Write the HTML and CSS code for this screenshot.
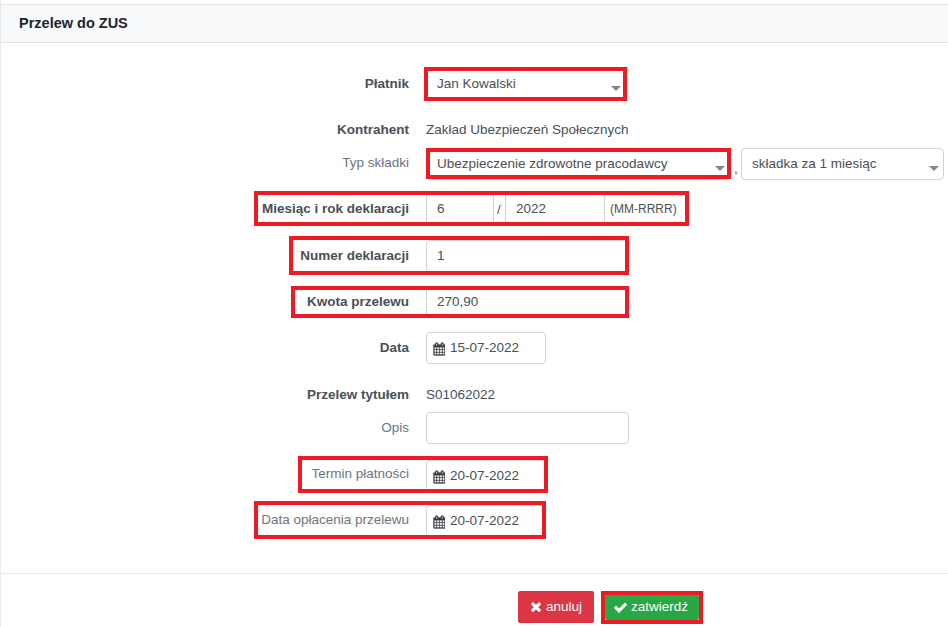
FILE: index.html
```html
<!DOCTYPE html>
<html lang="pl">
<head>
<meta charset="utf-8">
<title>Przelew do ZUS</title>
<link rel="stylesheet" href="styles.css">
</head>
<body>
<svg class="defs" width="0" height="0" aria-hidden="true">
  <symbol id="cal" viewBox="0 0 1664 1792"><path d="M192 1664h288v-288h-288v288zm352 0h320v-288h-320v288zm-352-352h288v-320h-288v320zm352 0h320v-320h-320v320zm-352-384h288v-288h-288v288zm736 736h320v-288h-320v288zm-384-736h320v-288h-320v288zm768 736h288v-288h-288v288zm-384-352h320v-320h-320v320zm-352-864v-288q0-13-9.500-22.500t-22.500-9.500h-64q-13 0-22.500 9.500t-9.500 22.500v288q0 13 9.500 22.500t22.500 9.500h64q13 0 22.500-9.500t9.500-22.500zm736 864h288v-320h-288v320zm-384-384h320v-288h-320v288zm384 0h288v-288h-288v288zm32-480v-288q0-13-9.500-22.500t-22.500-9.500h-64q-13 0-22.500 9.500t-9.500 22.500v288q0 13 9.500 22.500t22.500 9.500h64q13 0 22.500-9.500t9.500-22.500zm384-64v1280q0 52-38 90t-90 38h-1408q-52 0-90-38t-38-90v-1280q0-52 38-90t90-38h128v-96q0-66 47-113t113-47h64q66 0 113 47t47 113v96h384v-96q0-66 47-113t113-47h64q66 0 113 47t47 113v96h128q52 0 90 38t38 90z"/></symbol>
</svg>
<main class="panel">
  <header class="head"><h1 class="title">Przelew do ZUS</h1></header>
  <form class="form">
    <div class="row r-platnik">
      <label class="lbl strong">Płatnik</label>
      <div class="ctl select w-200"><span>Jan Kowalski</span><i class="arrow"></i></div>
    </div>
    <div class="row r-kontr">
      <label class="lbl strong">Kontrahent</label>
      <span class="static">Zakład Ubezpieczeń Społecznych</span>
    </div>
    <div class="row r-typ">
      <label class="lbl raised">Typ składki</label>
      <div class="ctl select w-304"><span>Ubezpieczenie zdrowotne pracodawcy</span><i class="arrow"></i></div>
      <span class="comma">,</span>
      <div class="ctl select w-203"><span>składka za 1 miesiąc</span><i class="arrow"></i></div>
    </div>
    <div class="row r-mies">
      <label class="lbl strong">Miesiąc i rok deklaracji</label>
      <input class="ctl w-68" value="6">
      <span class="slash">/</span>
      <input class="ctl w-100" value="2022">
      <span class="hint">(MM-RRRR)</span>
    </div>
    <div class="row r-num">
      <label class="lbl strong">Numer deklaracji</label>
      <input class="ctl w-203" value="1">
    </div>
    <div class="row r-kwota">
      <label class="lbl strong">Kwota przelewu</label>
      <input class="ctl w-203" value="270,90">
    </div>
    <div class="row r-data">
      <label class="lbl strong">Data</label>
      <div class="ctl date"><svg class="cal"><use href="#cal"/></svg><span>15-07-2022</span></div>
    </div>
    <div class="row r-tyt">
      <label class="lbl strong">Przelew tytułem</label>
      <span class="static">S01062022</span>
    </div>
    <div class="row r-opis">
      <label class="lbl">Opis</label>
      <input class="ctl w-203" value="">
    </div>
    <div class="row r-term">
      <label class="lbl raised-2">Termin płatności</label>
      <div class="ctl date"><svg class="cal"><use href="#cal"/></svg><span>20-07-2022</span></div>
    </div>
    <div class="row r-opl">
      <label class="lbl raised">Data opłacenia przelewu</label>
      <div class="ctl date"><svg class="cal"><use href="#cal"/></svg><span>20-07-2022</span></div>
    </div>
  </form>
  <footer class="foot">
    <button class="btn cancel" type="button"><svg class="ico" viewBox="0 0 1408 1792"><path d="M1298 1214q0 40-28 68l-136 136q-28 28-68 28t-68-28l-294-294-294 294q-28 28-68 28t-68-28l-136-136q-28-28-28-68t28-68l294-294-294-294q-28-28-28-68t28-68l136-136q28-28 68-28t68 28l294 294 294-294q28-28 68-28t68 28l136 136q28 28 28 68t-28 68l-294 294 294 294q28 28 28 68z"/></svg>anuluj</button>
    <button class="btn ok" type="button"><svg class="ico ico-ok" viewBox="0 0 1792 1792"><path d="M1671 566q0 40-28 68l-724 724-136 136q-28 28-68 28t-68-28l-136-136-362-362q-28-28-28-68t28-68l136-136q28-28 68-28t68 28l294 295 656-657q28-28 68-28t68 28l136 136q28 28 28 68z"/></svg>zatwierdź</button>
  </footer>
</main>
<div class="mark m1"></div>
<div class="mark m2"></div>
<div class="mark m3"></div>
<div class="mark m4"></div>
<div class="mark m5"></div>
<div class="mark m6"></div>
<div class="mark m7"></div>
<div class="mark m8"></div>
</body>
</html>
```
FILE: styles.css
```css
* { box-sizing: border-box; }
html, body { margin: 0; padding: 0; height: 627px; overflow: hidden; background: #fff; }
body { font-family: "Liberation Sans", Arial, sans-serif; font-size: 13.5px; color: #495057; position: relative; }
.defs { position: absolute; }

.panel { padding-top: 4px; border-left: 1px solid #e9ecef; height: 627px; }
.head { height: 39px; background: #f8f9fa; border-top: 1px solid #e4e7ea; border-bottom: 1px solid #dfe2e5; padding: 0 18px 2px; display: flex; align-items: center; }
.title { margin: 0; font-size: 14.5px; font-weight: 700; color: #212529; }

.form { height: 530px; display: flex; flex-direction: column; }
.row { display: flex; align-items: center; height: 32px; }
.lbl { width: 409px; flex: none; padding-right: 1px; text-align: right; color: #6c757d; margin-right: 16px; position: relative; top: -1px; }
.lbl.strong { font-weight: 700; color: #495057; }
.lbl.raised { top: -2px; }
.lbl.raised-2 { top: -3px; }
.static { color: #495057; position: relative; top: -1px; }

.r-platnik { margin-top: 25px; }
.r-kontr { margin-top: 14px; }
.r-typ { margin-top: 2px; }
.r-mies { margin-top: 13px; }
.r-num { margin-top: 15px; }
.r-kwota { margin-top: 14px; }
.r-data { margin-top: 14px; }
.r-tyt { margin-top: 15px; }
.r-opis { margin-top: 1px; }
.r-term { margin-top: 16px; }
.r-opl { margin-top: 13px; }

.ctl { height: 32px; border: 1px solid #ced4da; border-radius: 4px; background: #fff; font: 13.5px "Liberation Sans", Arial, sans-serif; color: #495057; padding: 0 10px 2px; outline: none; display: flex; align-items: center; flex: none; position: relative; }
.w-200 { width: 200px; }
.w-304 { width: 304px; }
.w-203 { width: 203px; }
.w-68 { width: 68px; }
.w-100 { width: 100px; }
.arrow { position: absolute; right: 4px; bottom: 8px; width: 0; height: 0; border-left: 5px solid transparent; border-right: 5px solid transparent; border-top: 5px solid #888; }
.comma { width: 11px; text-align: left; padding-left: 4px; align-self: flex-end; line-height: 22px; }
.slash { width: 11px; text-align: left; padding-left: 3px; font-size: 13px; }
.hint { font-size: 12px; margin-left: 5px; }
.date { width: 120px; padding: 0 0 2px 6px; color: #495057; }
.cal { width: 12px; height: 14px; margin-right: 5px; fill: #343a40; stroke: #343a40; stroke-width: 40; flex: none; position: relative; top: 2px; }

.foot { border-top: 1px solid #e9ecef; height: 54px; position: relative; display: flex; padding: 17px 0 0 517px; gap: 11px; }
.btn { height: 32px; border: 1px solid transparent; border-radius: 2px; font: 13.5px "Liberation Sans", Arial, sans-serif; color: #fff; display: flex; align-items: center; justify-content: center; padding: 0 0 2px; }
.cancel { width: 76px; background: #dc3545; border-color: #dc3545; }
.ok { width: 94px; background: #28a745; margin-top: 3px; height: 26px; padding-right: 3px; }
.ico { width: 12px; height: 15px; fill: #fff; margin-right: 4px; flex: none; position: relative; top: 1px; }
.ico-ok { width: 15px; height: 15px; margin-right: 3px; }

.mark { position: absolute; border: 4px solid #ed1c24; }
.m1 { left: 424px; top: 67px; width: 203px; height: 34px; }
.m2 { left: 426px; top: 148px; width: 305px; height: 31px; }
.m3 { left: 254px; top: 191px; width: 435px; height: 35px; }
.m4 { left: 289px; top: 236px; width: 340px; height: 39px; }
.m5 { left: 291px; top: 286px; width: 338px; height: 32px; }
.m6 { left: 298px; top: 456px; width: 250px; height: 37px; }
.m7 { left: 254px; top: 501px; width: 292px; height: 38px; }
.m8 { left: 601px; top: 591px; width: 102px; height: 33px; }
```
